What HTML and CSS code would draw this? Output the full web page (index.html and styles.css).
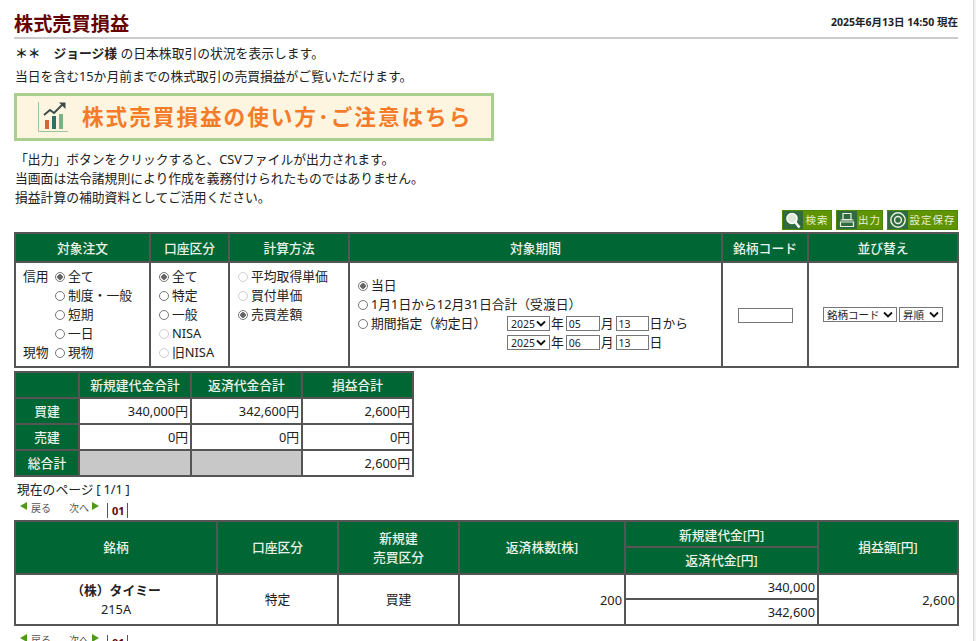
FILE: index.html
```html
<!DOCTYPE html>
<html lang="ja">
<head>
<meta charset="utf-8">
<title>株式売買損益</title>
<link rel="stylesheet" href="styles.css">
</head>
<body>
<div class="page">
<main class="main">
  <header class="title-bar">
    <h1>株式売買損益</h1>
    <div class="stamp">2025年6月13日 14:50 現在</div>
  </header>
  <p class="lead"><b>＊＊　ジョージ様</b> の日本株取引の状況を表示します。</p>
  <p class="lead second">当日を含む15か月前までの株式取引の売買損益がご覧いただけます。</p>
  <a class="banner">
    <svg class="banner-icon" viewBox="0 0 32 32" width="32" height="32">
      <path d="M1.5 1v29.5H31" fill="none" stroke="#9cc69a" stroke-width="1"/>
      <path d="M8 19h4v9H8z" fill="#d9623a"/><path d="M15 15h4v13h-4z" fill="#2f6f6a"/><path d="M22 13h4v15h-4z" fill="#7fb08a"/>
      <path d="M7 14l6-5 4 3 9-9" fill="none" stroke="#3a4a4a" stroke-width="1.8"/>
      <path d="M22 1.500h6.500v6.500z" fill="#3a4a4a"/>
    </svg>
    <span>株式売買損益の使い方･ご注意はちら</span>
  </a>
  <div class="notes">
    <p>「出力」ボタンをクリックすると、CSVファイルが出力されます。</p>
    <p>当画面は法令諸規則により作成を義務付けられたものではありません。</p>
    <p>損益計算の補助資料としてご活用ください。</p>
  </div>
  <div class="actions">
    <button class="act w50" type="button"><span class="act-icon">
      <svg viewBox="0 0 18 18" width="18" height="18"><circle cx="8" cy="7.500" r="5" fill="#dfe8d8" stroke="#fff" stroke-width="1.600"/><path d="M11.500 11.500l4 5" stroke="#fff" stroke-width="2.500"/></svg></span><span class="act-label">検索</span></button>
    <button class="act w47" type="button"><span class="act-icon">
      <svg viewBox="0 0 18 18" width="18" height="18"><path d="M5 2.500h8v6H5zM2.500 11h13v4.500h-13z" fill="none" stroke="#e8efe0" stroke-width="1.200"/><path d="M2.500 9h13" stroke="#e8efe0"/></svg></span><span class="act-label">出力</span></button>
    <button class="act w71" type="button"><span class="act-icon">
      <svg viewBox="0 0 18 18" width="18" height="18"><circle cx="9" cy="9" r="7.200" fill="none" stroke="#e8efe0" stroke-width="1.500"/><circle cx="9" cy="9" r="3.400" fill="none" stroke="#e8efe0" stroke-width="1.500"/></svg></span><span class="act-label">設定保存</span></button>
  </div>
  <table class="grid filter">
    <colgroup><col class="f1"><col class="f2"><col class="f3"><col class="f4"><col class="f5"><col class="f6"></colgroup>
    <thead><tr><th>対象注文</th><th>口座区分</th><th>計算方法</th><th>対象期間</th><th>銘柄コード</th><th>並び替え</th></tr></thead>
    <tbody><tr>
      <td class="opts">
        <div class="opt-grid">
          <span>信用</span><label><input type="radio" name="a" checked>全て</label>
          <span></span><label><input type="radio" name="a">制度・一般</label>
          <span></span><label><input type="radio" name="a">短期</label>
          <span></span><label><input type="radio" name="a">一日</label>
          <span>現物</span><label><input type="radio" name="a">現物</label>
        </div>
      </td>
      <td class="opts">
        <label><input type="radio" name="b" checked>全て</label>
        <label><input type="radio" name="b">特定</label>
        <label><input type="radio" name="b">一般</label>
        <label><input type="radio" name="b" disabled>NISA</label>
        <label><input type="radio" name="b" disabled>旧NISA</label>
      </td>
      <td class="opts top">
        <label><input type="radio" name="c" disabled>平均取得単価</label>
        <label><input type="radio" name="c" disabled>買付単価</label>
        <label><input type="radio" name="c" checked>売買差額</label>
      </td>
      <td class="period">
        <label><input type="radio" name="d" checked>当日</label>
        <label><input type="radio" name="d">1月1日から12月31日合計（受渡日）</label>
        <div class="period-row">
          <label class="period-label"><input type="radio" name="d">期間指定（約定日）</label>
          <div class="dates">
            <div class="date-row"><select class="sel year"><option>2025</option></select>年<input class="box mm" value="05">月<input class="box dd" value="13">日から</div>
            <div class="date-row"><select class="sel year"><option>2025</option></select>年<input class="box mm" value="06">月<input class="box dd" value="13">日</div>
          </div>
        </div>
      </td>
      <td class="center"><input class="box code"></td>
      <td class="center"><div class="sorts"><select class="sel sort-key"><option>銘柄コード</option></select><select class="sel sort-dir"><option>昇順</option></select></div></td>
    </tr></tbody>
  </table>
  <table class="grid summary">
    <colgroup><col class="s1"><col class="s2"><col class="s3"><col class="s4"></colgroup>
    <thead><tr><th></th><th>新規建代金合計</th><th>返済代金合計</th><th>損益合計</th></tr></thead>
    <tbody>
      <tr><th>買建</th><td class="num">340,000円</td><td class="num">342,600円</td><td class="num">2,600円</td></tr>
      <tr><th>売建</th><td class="num">0円</td><td class="num">0円</td><td class="num">0円</td></tr>
      <tr><th>総合計</th><td class="blank"></td><td class="blank"></td><td class="num">2,600円</td></tr>
    </tbody>
  </table>
  <div class="page-now">現在のページ [ 1/1 ]</div>
  <nav class="pager">
    <span class="tri left"></span><span class="pg">戻る</span><span class="pg next">次へ</span><span class="tri right"></span><span class="pno"><b>01</b></span>
  </nav>
  <table class="grid result">
    <colgroup><col class="r1"><col class="r2"><col class="r3"><col class="r4"><col class="r5"><col class="r6"></colgroup>
    <thead>
      <tr class="h1"><th rowspan="2">銘柄</th><th rowspan="2">口座区分</th><th rowspan="2">新規建<br>売買区分</th><th rowspan="2">返済株数[株]</th><th>新規建代金[円]</th><th rowspan="2">損益額[円]</th></tr>
      <tr class="h2"><th>返済代金[円]</th></tr>
    </thead>
    <tbody>
      <tr class="b1"><td rowspan="2" class="center name"><b>（株）タイミー</b><br>215A</td><td rowspan="2" class="center">特定</td><td rowspan="2" class="center">買建</td><td rowspan="2" class="num">200</td><td class="num">340,000</td><td rowspan="2" class="num">2,600</td></tr>
      <tr class="b2"><td class="num">342,600</td></tr>
    </tbody>
  </table>
  <nav class="pager after">
    <span class="tri left"></span><span class="pg">戻る</span><span class="pg next">次へ</span><span class="tri right"></span><span class="pno"><b>01</b></span>
  </nav>
</main>
<div class="scroll-edge"></div>
</div>
</body>
</html>
```

FILE: styles.css
```css
* { box-sizing: border-box; }
html, body { margin: 0; height: 641px; overflow: hidden; background: #fff; }
body { font: 12.8px/19px "Noto Sans", "Noto Sans CJK JP", sans-serif; color: #222; }
.page { display: flex; height: 641px; overflow: hidden; }
.main { width: 973px; padding: 0 15px 0 14px; }
.scroll-edge { width: 3px; background: #f1f1f1; border-left: 1px solid #d8d8d8; }
p { margin: 0; }

.title-bar { display: flex; justify-content: space-between; align-items: flex-end; height: 39px; border-bottom: 2px solid #ccc; }
h1 { margin: 0; font-size: 19.2px; line-height: 26px; font-weight: 700; color: #660000; }
.stamp { font-size: 10.5px; line-height: 14px; font-weight: 700; color: #222; padding: 0 0 8px; }

.lead { padding-left: 1px; margin-top: 5px; line-height: 19px; }
.lead.second { margin-top: 4px; }

.banner { display: flex; align-items: center; width: 480px; height: 48px; margin-top: 7px; border: 3px solid #a9cf8e; background: #fef5e0; padding-left: 20px; color: #f47b2a; font-size: 21.6px; line-height: 28px; font-weight: 700; letter-spacing: 2px; }
.banner-icon { flex: none; margin-right: 13px; }

.notes { margin-top: 9px; padding-left: 1px; }
.notes p { line-height: 19px; }

.actions { display: flex; justify-content: flex-end; gap: 4px; margin-top: 3px; height: 20px; }
.act { display: flex; align-items: stretch; height: 20px; padding: 0; border: 1px solid #4c8a00; background: #5f9400; color: #e6f0d4; font: inherit; font-size: 10.5px; letter-spacing: 1px; }
.w50 { width: 50px; } .w47 { width: 47px; } .w71 { width: 71px; }
.act-icon { display: flex; align-items: center; justify-content: center; width: 20px; flex: none; background: #2f6b3f; }
.act-label { flex: 1; line-height: 18px; text-align: center; white-space: nowrap; }

.grid { border-collapse: collapse; table-layout: fixed; border: 2px solid #555; }
.grid th, .grid td { border: 2px solid #555; padding: 0 2px; }
.grid th { background: #006633; color: #e8f2e8; font-weight: 500; text-align: center; }
.filter { width: 945px; margin-top: 2px; }
.filter thead th { height: 29px; padding-top: 1px; }
.filter tbody td { height: 105px; }
.f1 { width: 135px; } .f2 { width: 79px; } .f3 { width: 120px; } .f4 { width: 373px; } .f5 { width: 86px; } .f6 { width: 150px; }

label { display: flex; align-items: center; white-space: nowrap; }
label input { appearance: none; flex: none; width: 10px; height: 10px; margin: 0 3px 0 1px; border: 1px solid #777; border-radius: 50%; background: #fff; }
label input:checked { background: radial-gradient(circle, #666 0 2.500px, #fff 3px); }
label input:disabled { border-color: #cfcfcf; }

.opts { vertical-align: top; padding: 4px 4px 0 !important; }
.opts label { height: 19px; }
.opts:first-child { padding-left: 7px !important; }
.opts:nth-child(2) { padding-left: 7px !important; }
.opts.top { padding-left: 7px !important; }
.opt-grid { display: grid; grid-template-columns: 31px 1fr; }
.opt-grid span { line-height: 19px; }

.period { padding: 5px 6px 0 7px !important; vertical-align: top; }
.period > label { height: 19px; }
.period > label:first-child { margin-top: 8px; }
.period-row { display: flex; height: 38px; }
.period-row .period-label { align-self: flex-start; height: 19px; width: 150px; }
.dates { display: flex; flex-direction: column; }
.date-row { display: flex; align-items: center; height: 19px; gap: 1px; }
.sel { appearance: none; height: 15px; padding: 0 14px 0 3px; border: 1px solid #777; border-radius: 0; color: #222; font: 10.5px "Noto Sans", "Noto Sans CJK JP", sans-serif; background: #fff url("data:image/svg+xml,%3Csvg xmlns='http://www.w3.org/2000/svg' width='10' height='7'%3E%3Cpath d='M1 1.500l4 4 4-4' fill='none' stroke='%23111' stroke-width='1.800'/%3E%3C/svg%3E") no-repeat right 3px center; }
.box { height: 15px; padding: 0 2px; border: 1px solid #777; font: 10.5px "Noto Sans", sans-serif; color: #222; outline: none; }
.mm { width: 34px; margin-left: 1px; }
.dd { width: 33px; margin-left: 1px; }
.year { width: 43px; }
.code { width: 55px; }
.center { text-align: center; vertical-align: middle; }
.sorts { display: flex; justify-content: center; gap: 2px; }
.sort-key { width: 74px; }
.sort-dir { width: 44px; }
.num { text-align: right; vertical-align: middle; }

.summary { width: 400px; margin-top: 3px; }
.summary thead th { height: 26px; padding-top: 1px; }
.summary tbody th, .summary tbody td { height: 26px; }
.s1 { width: 64px; } .s2 { width: 112px; } .s3 { width: 111px; } .s4 { width: 111px; }
.blank { background: #c8c8c8; }

.page-now { margin-top: 3px; padding-left: 3px; line-height: 19px; word-spacing: -0.5px; }
.pager { display: flex; align-items: center; height: 18px; padding-left: 6px; font-size: 10px; color: #555; }
.pg { margin-left: 4px; }
.pg.next { margin-left: 18px; margin-right: 3px; }
.tri { width: 0; height: 0; border-top: 4.5px solid transparent; border-bottom: 4.5px solid transparent; margin-top: -4px; }
.tri.left { border-right: 7px solid #4c9a1a; }
.tri.right { border-left: 7px solid #4c9a1a; }
.pno { margin-left: 8px; padding: 0 2px 0 4px; border-left: 1px solid #555; border-right: 1px solid #555; line-height: 15px; margin-top: 4px; font-size: 11px; }
.pno b { color: #660000; }

.result { width: 945px; margin-top: 3px; }
.h1 th { height: 26px; }
.h2 th { height: 27px; }
.h1 th:nth-child(5) { padding-top: 2px; }
.b1 td { height: 25px; }
.b2 td { height: 26px; }
.b1 td.num, .b2 td.num { padding-top: 1px; }
.r1 { width: 202px; } .r2 { width: 121px; } .r3 { width: 121px; } .r4 { width: 166px; } .r5 { width: 193px; } .r6 { width: 140px; }
.name { line-height: 19px; }
.pager.after { margin-top: 5px; }
```
